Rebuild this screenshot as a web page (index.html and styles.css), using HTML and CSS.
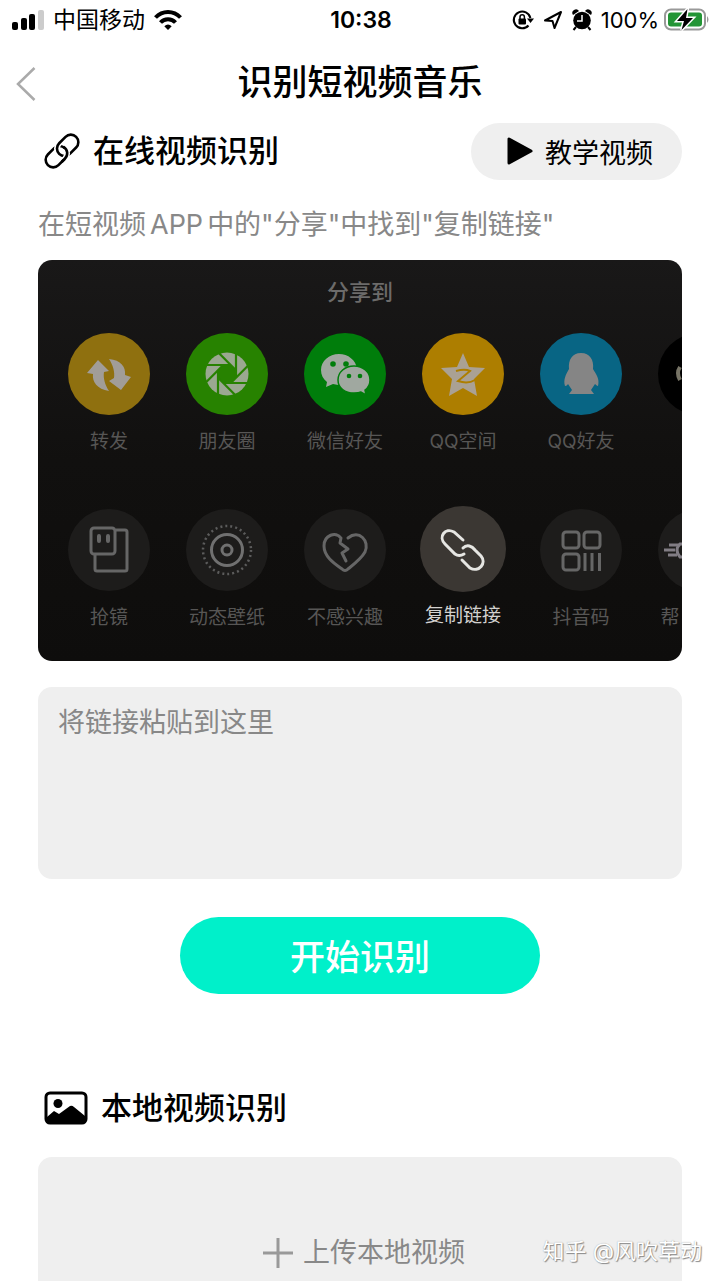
FILE: index.html
```html
<!DOCTYPE html>
<html lang="zh-CN">
<head>
<meta charset="utf-8">
<meta name="viewport" content="width=device-width, initial-scale=1">
<title>识别短视频音乐</title>
<link rel="stylesheet" href="styles.css">
</head>
<body>
<div class="page">
  <div class="status">
    <div class="status-left">
      <svg width="32" height="20" viewBox="0 0 32 20"><rect x="0" y="12" width="6" height="8" rx="2"/><rect x="9" y="8" width="6" height="12" rx="2"/><rect x="17" y="4" width="6" height="16" rx="2"/><rect x="26" y="0" width="6" height="20" rx="2" fill="#ccc"/></svg>
      <span class="carrier">中国移动</span>
      <svg width="28" height="22" viewBox="0 0 28 22" fill="none" stroke="#000" stroke-width="4"><path d="M1.500 8.500C8.500 1 19.500 1 26.500 8.500"/><path d="M6.500 13.500C10.500 9 17.500 9 21.500 13.500"/><path d="M10.300 17.300Q14 13.800 17.700 17.300L14 21z" fill="#000" stroke="none"/></svg>
    </div>
    <div class="clock">10:38</div>
    <div class="status-right">
      <svg width="22" height="22" viewBox="0 0 22 22" fill="none" stroke="#000" stroke-width="2"><path d="M16.500 16.500A8.400 8.400 0 1 1 18.400 9"/><path d="M15 9.500h7l-3.500 4.500z" fill="#000" stroke="none"/><rect x="6.500" y="9.500" width="7.500" height="6" rx="1" fill="#000" stroke="none"/><path d="M8 10V8a2.200 2.200 0 0 1 4.400 0v2" stroke-width="1.500"/></svg>
      <svg width="20" height="20" viewBox="0 0 20 20" fill="none" stroke="#000" stroke-width="2" stroke-linejoin="round"><path d="M2 10.500L18 2L11.500 18L9.500 11z"/></svg>
      <svg width="20" height="22" viewBox="0 0 20 22"><circle cx="10" cy="11.500" r="8.800"/><path d="M1 6a3.500 3.500 0 0 1 6-4zM19 6a3.500 3.500 0 0 0-6-4z"/><path d="M4 18l-2.500 3M16 18l2.500 3" stroke="#000" stroke-width="2"/><path d="M10 6v6H5" fill="none" stroke="#fff" stroke-width="1.500"/></svg>
      <span class="percent">100%</span>
      <svg width="46" height="24" viewBox="0 0 46 24"><rect x="1" y="1.500" width="40" height="20" rx="6" fill="#fff" stroke="#999" stroke-width="2"/><rect x="4" y="4.500" width="34" height="14" rx="3" fill="#249536"/><path d="M43 8q3 3.500 0 7z" fill="#999"/><path d="M23.500 1L13 13h7l-2.500 9L29 10h-7z" stroke="#fff" stroke-width="3"/><path d="M23.500 1L13 13h7l-2.500 9L29 10h-7z"/></svg>
    </div>
  </div>

  <header class="nav">
    <button class="back" aria-label="返回"><svg width="20" height="34" viewBox="0 0 20 34" fill="none" stroke="#aaa" stroke-width="2.500"><path d="M18.500 1L2 17l16.500 16"/></svg></button>
    <h1>识别短视频音乐</h1>
  </header>

  <main class="content">
    <div class="section-head">
      <h2><svg width="36" height="36" viewBox="0 0 36 36" fill="none" stroke="#000" stroke-width="2.600"><g transform="rotate(-45 18 18)"><rect x="-2" y="10.500" width="24" height="15" rx="7.500"/><path d="M18 10.500H21.500A7.500 7.500 0 0 0 14 18A7.500 7.500 0 0 0 21.500 25.500" stroke="#fff" stroke-width="6"/><rect x="14" y="10.500" width="24" height="15" rx="7.500"/><path d="M22 18A7.500 7.500 0 0 1 14.500 25.500" stroke="#fff" stroke-width="6"/><path d="M22 16A7.500 7.500 0 0 1 14.500 25.500H10"/></g></svg>在线视频识别</h2>
      <button class="tutorial"><svg width="26" height="28" viewBox="0 0 26 28"><path d="M2 2v24L24 14z" stroke="#000" stroke-width="3" stroke-linejoin="round"/></svg>教学视频</button>
    </div>
    <p class="hint">在短视频<span class="latin">APP</span>中的"分享"中找到"复制链接"</p>

    <section class="share">
      <h3>分享到</h3>
      <ul class="share-row">
        <li><span class="disc yellow"><svg viewBox="0 0 82 82" fill="#a19d98"><path d="M19 40L30 27L41 38L36 39C35 45 37 52 41 58C29 56 24 49 25 41z"/><path d="M41 26C53 27 58 34 57 42L63 44L53 57L41 48L46 45C47 39 45 32 41 26z"/></svg></span>转发</li>
        <li><span class="disc lime"><svg viewBox="0 0 82 82"><g transform="translate(41 41)"><circle r="21.500" fill="#9ba891"/><path d="M-3.700-9H3.700L9-3.700V3.700L3.700 9H-3.700L-9 3.700V-3.700z" fill="#278200"/><g stroke="#278200" stroke-width="2.200"><path d="M4-9H-22"/><path d="M4-9H-22" transform="rotate(45)"/><path d="M4-9H-22" transform="rotate(90)"/><path d="M4-9H-22" transform="rotate(135)"/><path d="M4-9H-22" transform="rotate(180)"/><path d="M4-9H-22" transform="rotate(225)"/><path d="M4-9H-22" transform="rotate(270)"/><path d="M4-9H-22" transform="rotate(315)"/></g></g></svg></span>朋友圈</li>
        <li><span class="disc green"><svg viewBox="0 0 82 82"><path d="M35 21c-10 0-18 7-18 16 0 5 2 9 6 12l-1 5 7-3c16 4 25-5 24-15-1-9-9-15-18-15z" fill="#a0a8a0"/><path d="M50 33c-9 0-16 6-16 14s7 13 16 13c3 0 5 0 7-1l5 3-1-5c3-2 5-6 5-10 0-8-7-14-16-14z" fill="#a0a8a0" stroke="#007d0b" stroke-width="1.500"/><g fill="#007d0b"><circle cx="29" cy="31" r="2.800"/><circle cx="42" cy="31" r="2.800"/><circle cx="45" cy="43" r="2.300"/><circle cx="56" cy="43" r="2.300"/></g></svg></span>微信好友</li>
        <li><span class="disc gold"><svg viewBox="0 0 82 82"><path d="M41 20l6 14 16 1-11 11 3 17-14-8-14 8 3-17-11-11 16-1z" fill="#aaa194"/><path d="M34 38C41 36 46 37 48 38L36 48C42 50 48 50 53 47" fill="none" stroke="#ad7e00" stroke-width="2"/></svg></span>QQ空间</li>
        <li><span class="disc blue"><svg viewBox="0 0 82 82"><path d="M41 20C32 20 28 27 29 36C26 41 23 47 25 53C27 53 28 51 28 51L32 57L29 61H54L51 57L55 51S57 53 58 53C60 46 56 41 53 36C54 27 50 20 41 20z" fill="#858585"/></svg></span>QQ好友</li>
        <li><span class="disc black"><svg viewBox="0 0 82 82"><path d="M22 34q-4 6 0 13" fill="none" stroke="#777466" stroke-width="4"/></svg></span></li>
      </ul>
      <ul class="share-row tools">
        <li><span class="disc"><svg viewBox="0 0 82 82" fill="none" stroke="#666" stroke-width="3"><path d="M48 21h9q2 0 2 2v37q0 2-2 2H29q-2 0-2-2V45"/><rect x="23" y="19" width="24" height="26" rx="3"/><path d="M31 27v5M40 27v5" stroke-width="4" stroke-linecap="round"/></svg></span>抢镜</li>
        <li><span class="disc"><svg viewBox="0 0 82 82" fill="none" stroke="#707070" stroke-width="3"><circle cx="41" cy="41" r="15.500"/><circle cx="41" cy="41" r="5"/><circle cx="41" cy="41" r="24" stroke-width="2.500" stroke-dasharray="2 3.030" stroke="#5c5c5c"/></svg></span>动态壁纸</li>
        <li><span class="disc"><svg viewBox="0 0 82 82" fill="none" stroke="#666" stroke-width="3" stroke-linecap="round" stroke-linejoin="round"><path d="M44 29C55 20 66 32 61 43C57 50 49 56 44 60Q41 63 38 60C31 55 20 48 20 37C20 26 32 22 37 29L36 34L44 40L38 44L42 52"/></svg></span>不感兴趣</li>
        <li class="active"><span class="disc"><svg viewBox="0 0 86 86" fill="none" stroke="#e6e6e3" stroke-width="3" stroke-linecap="round"><path d="M43 34L34 26C25 21 18 31 25 38L35 48Q39 51 44 48"/><path d="M43 42C47 38 52 40 55 44L61 50C67 57 59 67 50 62L42 54"/></svg></span>复制链接</li>
        <li><span class="disc"><svg viewBox="0 0 82 82" fill="none" stroke="#666" stroke-width="3"><rect x="23" y="23" width="16" height="16" rx="3"/><rect x="44" y="23" width="16" height="16" rx="3"/><rect x="23" y="45" width="16" height="16" rx="3"/><path d="M45 44v18M52 44v18M59.500 44v18"/></svg></span>抖音码</li>
        <li><span class="disc"><svg viewBox="0 0 82 82" fill="none" stroke="#817d84" stroke-width="3"><path d="M11 36h10M6 41h11M10 46h9"/><path d="M28 35h-6q-6 6 0 13h6"/></svg></span><span class="clipped-label">帮</span></li>
      </ul>
    </section>

    <textarea class="link-input" placeholder="将链接粘贴到这里" aria-label="视频链接"></textarea>
    <button class="start">开始识别</button>

    <h2 class="local-head"><svg width="44" height="34" viewBox="0 0 44 34"><rect x="2" y="2" width="40" height="30" rx="4" fill="none" stroke="#000" stroke-width="3"/><circle cx="14" cy="12.500" r="4.500"/><path d="M3 26l7-6 5 3 11-8q2-1 4 1l11 9v7H3z"/></svg>本地视频识别</h2>
    <div class="upload">
      <button class="upload-button"><svg width="30" height="30" viewBox="0 0 30 30" stroke="#999" stroke-width="3"><path d="M15 0v30M0 15h30"/></svg>上传本地视频</button>
      <span class="watermark">知乎 @风吹草动</span>
    </div>
  </main>
</div>
</body>
</html>
```
FILE: styles.css
```css
* { box-sizing: border-box; }
body, h1, h2, h3, p, ul { margin: 0; padding: 0; }
body { background: #fff; color: #000; font-family: Inter, "Noto Sans CJK SC", sans-serif; }
button, textarea { font: inherit; color: inherit; border: 0; padding: 0; margin: 0; }
button { cursor: pointer; }
svg { display: block; flex: none; }
.page { min-height: 100vh; display: flex; flex-direction: column; }

.status { height: 40px; padding: 0 10px 0 12px; display: grid; grid-template-columns: 1fr auto 1fr; align-items: center; line-height: 30px; }
.status-left, .status-right { display: flex; align-items: center; }
.status-left { gap: 9px; }
.status-right { justify-content: flex-end; gap: 9px; }
.carrier { font-size: 23px; }
.clock { font-size: 23px; font-weight: 600; }
.percent { font-size: 22px; }
.status-right svg:last-child { margin-left: -4px; }

.nav { height: 84px; padding: 0 16px; display: grid; grid-template-columns: 1fr auto 1fr; align-items: center; }
.back { background: none; justify-self: start; padding-top: 3px; }
h1 { font-size: 35px; font-weight: 500; line-height: 50px; }

.content { flex: 1; display: flex; flex-direction: column; padding: 0 38px; }
.section-head { display: flex; justify-content: space-between; align-items: center; margin-top: -1px; }
h2 { display: flex; align-items: center; gap: 13px; padding-left: 6px; font-size: 31px; font-weight: 500; line-height: 46px; }
.section-head h2 { padding-bottom: 2px; }
.tutorial { display: flex; align-items: center; gap: 12px; height: 57px; padding: 0 29px 1px 36px; border-radius: 29px; background: #efefef; font-size: 27px; }
.hint { margin-top: 25px; font-size: 27px; line-height: 40px; color: #888; }
.latin { margin: 0 4px; }

.share { margin-top: 15px; padding: 12px 0 28px; border-radius: 14px; overflow: hidden; background: linear-gradient(#191818, #11100f 50%, #0e0d0c); color: #575655; }
h3 { margin-bottom: 21px; font-size: 22px; font-weight: 500; line-height: 40px; text-align: center; color: #6c6b6a; }
.share-row { display: flex; list-style: none; padding-left: 12px; }
.share-row li { flex: 0 0 118px; display: flex; flex-direction: column; align-items: center; gap: 12px; font-size: 19px; line-height: 30px; white-space: nowrap; }
.disc { width: 82px; height: 82px; border-radius: 50%; background: #1d1c1b; }
.yellow { background: #8f700f; }
.lime { background: #278200; }
.green { background: #007d0b; }
.gold { background: #ad7e00; }
.blue { background: #086584; }
.black { background: #000; }
.clipped-label { padding-right: 58px; }
.tools { margin-top: 49px; align-items: flex-end; }
.share-row .active { gap: 9px; color: #d2d1cf; padding-bottom: 2px; }
.active .disc { width: 86px; height: 86px; background: #3b3733; }

.link-input { display: block; width: 100%; height: 192px; margin-top: 26px; padding: 16px 20px; border-radius: 14px; background: #efefef; font-size: 27px; line-height: 40px; resize: none; }
.link-input::placeholder { color: #888; opacity: 1; }
.start { align-self: center; width: 56%; min-width: 240px; height: 77px; margin-top: 38px; padding-bottom: 2px; border-radius: 39px; background: #00f0ca; color: #fff; font-size: 35px; font-weight: 500; }
.local-head { margin-top: 91px; }
.upload { position: relative; flex: 1; margin-top: 26px; padding: 76px 0 0 8px; border-radius: 14px 14px 0 0; background: #efefef; }
.upload-button { display: flex; align-items: center; gap: 10px; margin: 0 auto; background: none; font-size: 27px; line-height: 40px; color: #888; }
.watermark { position: absolute; right: -20px; bottom: 14px; font-size: 22px; line-height: 32px; color: #fff; text-shadow: 1px 1px 1px #888, 0 0 1px #999; }
```
